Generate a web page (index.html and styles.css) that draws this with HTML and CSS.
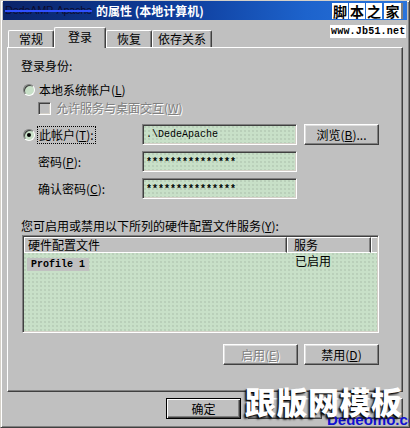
FILE: index.html
```html
<!DOCTYPE html>
<html lang="zh-CN">
<head>
  <meta charset="UTF-8" />
  <title>服务属性</title>
  <link rel="stylesheet" href="styles.css">
</head>
<body>

  <div class="window">
    <div class="titlebar">
      <span class="title-hidden">DedeAMP-Apache</span>
      <span class="title">的属性 (本地计算机)</span>
    </div>

    <div class="dialog">
      <div class="tabs">
        <div class="tab t1">常规</div>
        <div class="tab active">登录</div>
        <div class="tab t3">恢复</div>
        <div class="tab t4">依存关系</div>
      </div>

      <div class="panel">
        <div class="caption">登录身份:</div>
        <div class="opt opt-local"><span class="radio"></span><span>本地系统帐户(<u>L</u>)</span></div>
        <div class="opt opt-check disabled"><span class="check"></span><span>允许服务与桌面交互(<u>W</u>)</span></div>

        <div class="field first">
          <div class="lbl lbl-radio"><span class="radio on"></span><span class="focus">此帐户(<u>T</u>):</span></div>
          <div class="edit">.\DedeApache</div>
          <button class="btn browse">浏览(<u>B</u>)...</button>
        </div>
        <div class="field">
          <div class="lbl">密码(<u>P</u>):</div>
          <div class="edit stars">***************</div>
        </div>
        <div class="field">
          <div class="lbl">确认密码(<u>C</u>):</div>
          <div class="edit stars">***************</div>
        </div>

        <div class="caption list-caption">您可启用或禁用以下所列的硬件配置文件服务(<u>Y</u>):</div>
        <div class="listbox">
          <div class="list-head">
            <div class="col col-name">硬件配置文件</div>
            <div class="col col-svc">服务</div>
            <div class="col col-rest"></div>
          </div>
          <div class="list-row">
            <span class="cell-name"><span class="sel">Profile 1</span></span>
            <span class="cell-svc">已启用</span>
          </div>
        </div>

        <div class="actions">
          <button class="btn disabled">启用(<u>E</u>)</button>
          <button class="btn">禁用(<u>D</u>)</button>
        </div>
      </div>

      <div class="footer">
        <button class="btn default">确定</button>
        <!-- the next two buttons sit under the watermark, their labels don't show -->
        <button class="btn" aria-label="取消"></button>
        <button class="btn" aria-label="应用"></button>
      </div>
    </div>

    <!-- watermarks lying over the dialog -->
    <div class="mark-jb"><span>脚</span><span>本</span><span>之</span><span class="last">家</span></div>
    <div class="mark-url">www.Jb51.net</div>
    <div class="mark-dede">Dedeomo.com</div>
    <div class="mark-gbw">跟版网模板</div>
  </div>

</body>
</html>
```

FILE: styles.css
```css
html, body {
  margin: 0;
  background: #c0c0c0;
}
body {
  font-family: "Noto Sans CJK SC", sans-serif;
  font-size: 12px;
  color: #000;
}
u {
  text-decoration: underline;
  text-underline-offset: 1px;
}
.window {
  position: relative;
  box-sizing: border-box;
  width: 410px;
  height: 428px;
  overflow: hidden;
  border: 1px solid;
  border-color: #d4d0c8 #404040 #404040 #d4d0c8;
  box-shadow: inset 1px 1px #fff, inset -1px -1px #808080;
  padding: 0 2px;
  background: #c0c0c0;
}
.titlebar {
  height: 19px;
  display: flex;
  align-items: center;
  padding-left: 2px;
  background: linear-gradient(to right, #0a246a 0%, #0f3f9e 45%, #1d63cc 75%, #2a74dc 100%);
  color: #fff;
  font-weight: bold;
  line-height: 19px;
  white-space: nowrap;
}
.title-hidden {
  color: #0b0b30;
  font-family: "Liberation Sans", sans-serif;
  font-size: 11px;
  font-weight: normal;
  text-decoration: line-through;
  text-decoration-color: #3050ff;
  text-decoration-thickness: 2px;
  letter-spacing: -0.3px;
}
.title {
  margin-left: 4px;
}
.dialog {
  padding: 7px 4px 0 4px;
}
.tabs {
  display: flex;
  align-items: flex-end;
  height: 20px;
  padding-left: 1px;
  position: relative;
  z-index: 2;
}
.tab {
  box-sizing: border-box;
  height: 17px;
  border: 1px solid;
  border-bottom: none;
  border-color: #fff #404040 #404040 #fff;
  border-radius: 2px 2px 0 0;
  box-shadow: inset -1px 0 #808080;
  text-align: center;
  line-height: 16px;
  background: #c0c0c0;
}
.t1 { width: 46px; }
.t3 { width: 46px; }
.t4 { width: 60px; }
.tab.active {
  width: 52px;
  height: 21px;
  margin-bottom: -1px;
  line-height: 18px;
}
.panel {
  box-sizing: border-box;
  height: 345px;
  border: 1px solid;
  border-color: #fff #404040 #404040 #fff;
  box-shadow: inset -1px -1px #808080;
  padding: 10px 0 0 13px;
  position: relative;
  z-index: 1;
}
.caption {
  line-height: 16px;
}
.opt {
  display: flex;
  align-items: center;
  height: 16px;
  line-height: 16px;
}
.opt-local {
  margin-top: 8px;
  padding-left: 2px;
  gap: 4px;
}
.opt-check {
  margin-top: 2px;
  padding-left: 17px;
  gap: 5px;
}
.disabled,
.btn.disabled {
  color: #808080;
  text-shadow: 1px 1px #fff;
}
.radio {
  box-sizing: border-box;
  width: 12px;
  height: 12px;
  flex: none;
  border-radius: 50%;
  border: 1px solid;
  border-color: #808080 #fff #fff #808080;
  box-shadow: inset 1px 1px #404040;
  background: #c8e0c8;
  display: flex;
  align-items: center;
  justify-content: center;
}
.radio.on::after {
  content: "";
  width: 4px;
  height: 4px;
  border-radius: 50%;
  background: #000;
}
.check {
  box-sizing: border-box;
  width: 13px;
  height: 13px;
  flex: none;
  border: 1px solid;
  border-color: #808080 #fff #fff #808080;
  box-shadow: inset 1px 1px #404040, inset -1px -1px #d4d0c8;
  background: #c0c0c0;
}
.field {
  display: flex;
  align-items: center;
  height: 21px;
  margin-top: 6px;
}
.field.first {
  margin-top: 8px;
}
.lbl {
  box-sizing: border-box;
  width: 121px;
  padding-left: 17px;
  line-height: 16px;
}
.lbl-radio {
  display: flex;
  align-items: center;
  padding-left: 2px;
}
.focus {
  margin-left: 2px;
  padding: 0 1px;
  border: 1px dotted #000;
  line-height: 16px;
}
.edit {
  box-sizing: border-box;
  width: 155px;
  height: 21px;
  border: 1px solid;
  border-color: #808080 #fff #fff #808080;
  box-shadow: inset 1px 1px #404040, inset -1px -1px #d4d0c8;
  background-color: #c8e0c8;
  background-image: radial-gradient(circle, #b2c6b2 0.6px, transparent 0.9px);
  background-size: 4px 4px;
  font-family: "Liberation Mono", monospace;
  font-size: 10px;
  line-height: 19px;
  padding: 0 2px 0 3px;
  white-space: nowrap;
}
.edit.stars {
  font-weight: bold;
  line-height: 21px;
}
.btn {
  box-sizing: border-box;
  width: 75px;
  height: 21px;
  padding: 0;
  background: #c0c0c0;
  border: 1px solid;
  border-color: #fff #404040 #404040 #fff;
  box-shadow: inset -1px -1px #808080, inset 1px 1px #dfdfdf;
  font-family: "Noto Sans CJK SC", sans-serif;
  font-size: 12px;
  line-height: 18px;
  color: #000;
}
.btn.default {
  border-color: #000;
  box-shadow: inset 1px 1px #fff, inset -1px -1px #404040, inset -2px -2px #808080;
}
.browse {
  margin-left: 7px;
}
.list-caption {
  margin-top: 19px;
}
.listbox {
  box-sizing: border-box;
  width: 357px;
  height: 98px;
  margin: 1px 0 0 1px;
  border: 1px solid;
  border-color: #808080 #fff #fff #808080;
  box-shadow: inset 1px 1px #404040, inset -1px -1px #d4d0c8;
  padding: 1px;
  background-color: #c8e0c8;
  background-image: radial-gradient(circle, #b2c6b2 0.6px, transparent 0.9px);
  background-size: 4px 4px;
}
.list-head {
  display: flex;
  height: 16px;
  background: #c0c0c0;
}
.col {
  box-sizing: border-box;
  height: 16px;
  border-left: 1px solid #fff;
  border-top: 1px solid #fff;
  border-right: 1px solid #404040;
  border-bottom: 1px solid #fff;
  box-shadow: inset -1px 0 #808080;
  line-height: 14px;
  white-space: nowrap;
}
.col-name {
  width: 263px;
  padding-left: 3px;
}
.col-svc {
  width: 84px;
  padding-left: 6px;
}
.col-rest {
  flex: 1;
  border-right: none;
  box-shadow: none;
}
.list-row {
  display: flex;
  margin-top: 2px;
  height: 13px;
  line-height: 13px;
}
.cell-name {
  width: 268px;
  padding-left: 3px;
}
.sel {
  display: inline-block;
  background: #c0c0c0;
  padding: 0 4px;
  font-family: "Liberation Mono", monospace;
  font-size: 10px;
  font-weight: bold;
  line-height: 13px;
}
.cell-svc {
  line-height: 12px;
}
.actions {
  display: flex;
  justify-content: flex-end;
  gap: 6px;
  width: 358px;
  margin-top: 11px;
}
.footer {
  display: flex;
  justify-content: flex-end;
  gap: 6px;
  margin-top: 6px;
}

/* watermarks */
.mark-jb {
  position: absolute;
  top: 2px;
  left: 331px;
  display: flex;
  gap: 1px;
  z-index: 5;
}
.mark-jb span {
  width: 16px;
  height: 16px;
  background: #fff;
  color: #000;
  font-size: 14px;
  font-weight: bold;
  line-height: 16px;
  text-align: center;
}
.mark-jb .last {
  width: 19px;
  margin-left: 1px;
  box-sizing: border-box;
  border-right: 2px solid #808080;
}
.mark-url {
  position: absolute;
  top: 24px;
  left: 329px;
  background: #fff;
  padding: 0 1px;
  font-family: "Liberation Mono", monospace;
  font-size: 10px;
  font-weight: bold;
  letter-spacing: 0.2px;
  line-height: 13px;
  z-index: 5;
}
.mark-dede {
  position: absolute;
  top: 411px;
  left: 326px;
  color: #1010d0;
  font-family: "Liberation Sans", sans-serif;
  font-size: 15px;
  font-weight: bold;
  line-height: 16px;
  z-index: 5;
}
.mark-gbw {
  position: absolute;
  top: 380px;
  left: 244px;
  color: #fff;
  font-size: 31px;
  font-weight: 900;
  line-height: 40px;
  letter-spacing: 0.5px;
  text-shadow: -2px 2px 2px rgba(0, 0, 0, 0.85), -1px 1px 0 #333;
  z-index: 6;
}
```
